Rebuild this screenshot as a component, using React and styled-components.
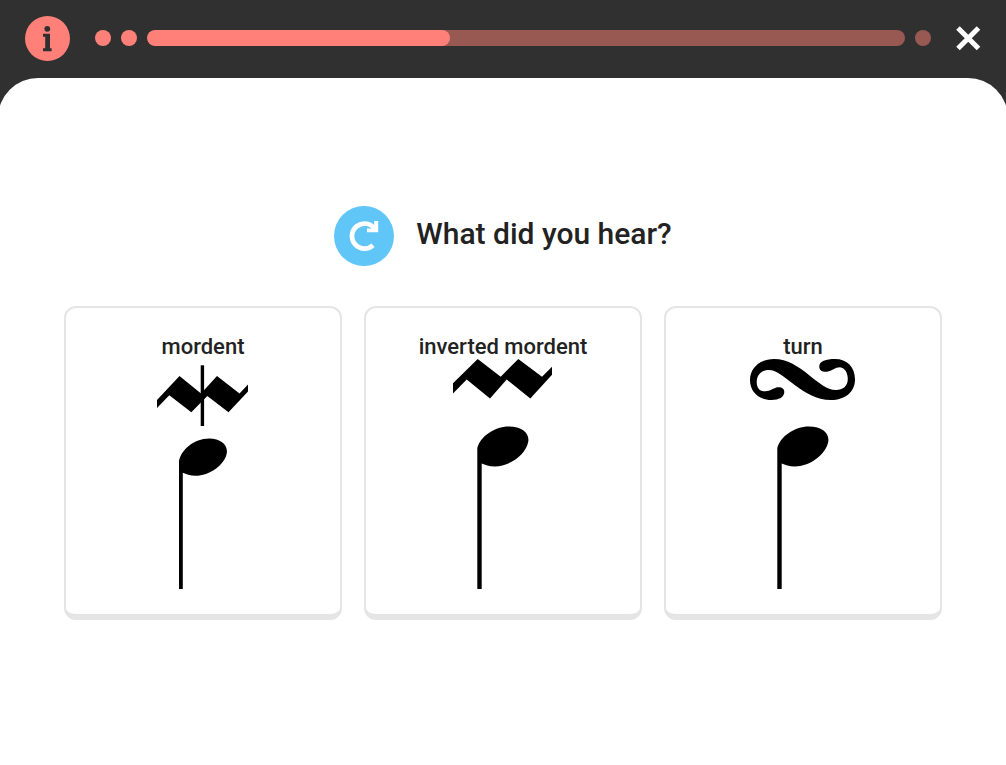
import React, { useState } from "react";
import styled, { createGlobalStyle } from "styled-components";

const GlobalStyle = createGlobalStyle`
  * {
    box-sizing: border-box;
  }
  body {
    margin: 0;
    background: #303030;
    color: #222222;
    font-family: Roboto, "Liberation Sans", sans-serif;
    font-weight: 500;
  }
`;

const Page = styled.div`
  display: flex;
  flex-direction: column;
  min-height: 100vh;
  overflow-x: hidden;
`;

const Header = styled.header`
  display: flex;
  align-items: center;
  gap: 25px;
  height: 78px;
  padding: 0 25px 2px;
`;

const IconButton = styled.button`
  display: flex;
  flex: none;
  align-items: center;
  justify-content: center;
  width: ${props => props.$size}px;
  height: ${props => props.$size}px;
  padding: 0;
  border: 0;
  border-radius: 50%;
  background: ${props => props.$color || "transparent"};
  cursor: pointer;
`;

const Steps = styled.div`
  display: flex;
  flex: 1;
  gap: 10px;
`;

const Dot = styled.span`
  flex: none;
  width: 16px;
  height: 16px;
  border-radius: 50%;
  background: ${props => (props.$done ? "#ff8078" : "#985953")};
`;

const Track = styled.div`
  flex: 1;
  height: 16px;
  border-radius: 8px;
  background: #985953;
  overflow: hidden;
`;

const Fill = styled.div`
  height: 100%;
  border-radius: 8px;
  background: #ff8078;
`;

const Panel = styled.main`
  flex: 1;
  display: flex;
  flex-direction: column;
  justify-content: center;
  margin: 0 -2px;
  padding: 0 66px 17px;
  border-radius: 40px 40px 0 0;
  background: #ffffff;
`;

const Question = styled.div`
  display: flex;
  align-items: center;
  justify-content: center;
  gap: 22px;
  margin-bottom: 40px;
`;

const Title = styled.h1`
  margin: 0;
  padding-bottom: 4px;
  font-size: 30px;
  font-weight: 500;
  line-height: 36px;
`;

const Answers = styled.div`
  display: grid;
  grid-template-columns: repeat(3, 1fr);
  gap: 22px;
`;

const Answer = styled.button`
  display: flex;
  flex-direction: column;
  align-items: center;
  padding: 25px 16px;
  border: 2px solid #e5e5e5;
  border-bottom-width: 6px;
  border-radius: 12px;
  background: #ffffff;
  color: inherit;
  font: inherit;
  font-size: 22px;
  line-height: 28px;
  cursor: pointer;
`;

const Notation = styled.svg`
  display: block;
  width: 110px;
  height: 228px;
  overflow: visible;
`;

const InfoIcon = () => (
  <svg width="45" height="45" viewBox="0 0 45 45" fill="#303030">
    <circle cx="22.3" cy="12.8" r="2.9" />
    <path d="M18 17.8h7v14.4h1.6v3.100H18v-3.100h2.200V20.800H18z" />
  </svg>
);

const CloseIcon = () => (
  <svg width="25" height="25" viewBox="0 0 25 25" stroke="#fff" strokeWidth="5">
    <path d="M2 2l20.500 20.500M22.500 2L2 22.500" />
  </svg>
);

const ReplayIcon = () => (
  <svg width="60" height="60" viewBox="0 0 60 60">
    <path
      d="M39 39.200A12.500 12.500 0 1 1 41 23.300"
      fill="none"
      stroke="#fff"
      strokeWidth="4.800"
    />
    <path d="M44.200 15v11.300H33v-3.800h7.200V15z" fill="#fff" />
  </svg>
);

const Mordent = () => (
  <>
    <path d="M9 41L31.500 17 53 34.500 69 17 91.500 34.500 100 25.500v7L80.500 53.300 59.300 37 43.300 53.300 21.300 36.300 9 49z" />
    <rect x="52.7" y="6.3" width="3.4" height="60.7" />
    <path d="M31 102C33 91 46 79.500 61 79.500C73 79.500 80 86 78.800 94C77 106 61 116.800 47.500 116.800C42 116.800 38 115 34.800 113.800V230H31z" />
  </>
);

const NoteHead = () => (
  <path d="M29.300 89C32 78 46 67.500 61 67.500C74 67.500 81.500 74 80.300 82.500C78 96 61 107.500 47 107.500C41 107.500 37 106 33.700 104.500V230H29.300z" />
);

const InvertedMordent = () => (
  <>
    <path d="M5 24.300L29.700 0 52.700 17.700 70.300 0 94 17.700 104 7.800v8L82.300 39.500 58.700 20.500 42 39.500 18.700 20.500 5 34.500z" />
    <NoteHead />
  </>
);

const Turn = () => (
  <>
    <path d="M36.300 33C36.300 29.500 33.500 28 30 28.300C25 29 22 32.500 17 32.300C11.500 32.300 8.700 29 8.700 23C8.700 16 13.500 11 21 11C36 11 54 41 83 41C97 41 107 33 107 20.500C107 8 99 0 87 0C78 0 71.300 2 71.300 7.500C71.300 12 75 13 79 12.700C84 12 87 8.300 92 8.300C97 9 99.800 14 99.800 20C99.800 27 95 31 88 31C70 31 53 0 26 0C12 0 2 9 2 21C2 33 11 41 23.500 41C31 41 36.300 38 36.300 33z" />
    <NoteHead />
  </>
);

const answers = [
  { label: "mordent", Sign: Mordent },
  { label: "inverted mordent", Sign: InvertedMordent },
  { label: "turn", Sign: Turn }
];

const App = () => {
  const [progress] = useState(40);

  return (
    <Page>
      <GlobalStyle />
      <Header>
        <IconButton $size={45} $color="#ff8078" aria-label="Info">
          <InfoIcon />
        </IconButton>
        <Steps>
          <Dot $done />
          <Dot $done />
          <Track>
            <Fill style={{ width: `${progress}%` }} />
          </Track>
          <Dot />
        </Steps>
        <IconButton $size={25} aria-label="Close">
          <CloseIcon />
        </IconButton>
      </Header>
      <Panel>
        <Question>
          <IconButton $size={60} $color="#60c5f7" aria-label="Play again">
            <ReplayIcon />
          </IconButton>
          <Title>What did you hear?</Title>
        </Question>
        <Answers>
          {answers.map(({ label, Sign }) => (
            <Answer key={label}>
              {label}
              <Notation viewBox="0 2 110 228" aria-hidden="true">
                <Sign />
              </Notation>
            </Answer>
          ))}
        </Answers>
      </Panel>
    </Page>
  );
};

export default App;
